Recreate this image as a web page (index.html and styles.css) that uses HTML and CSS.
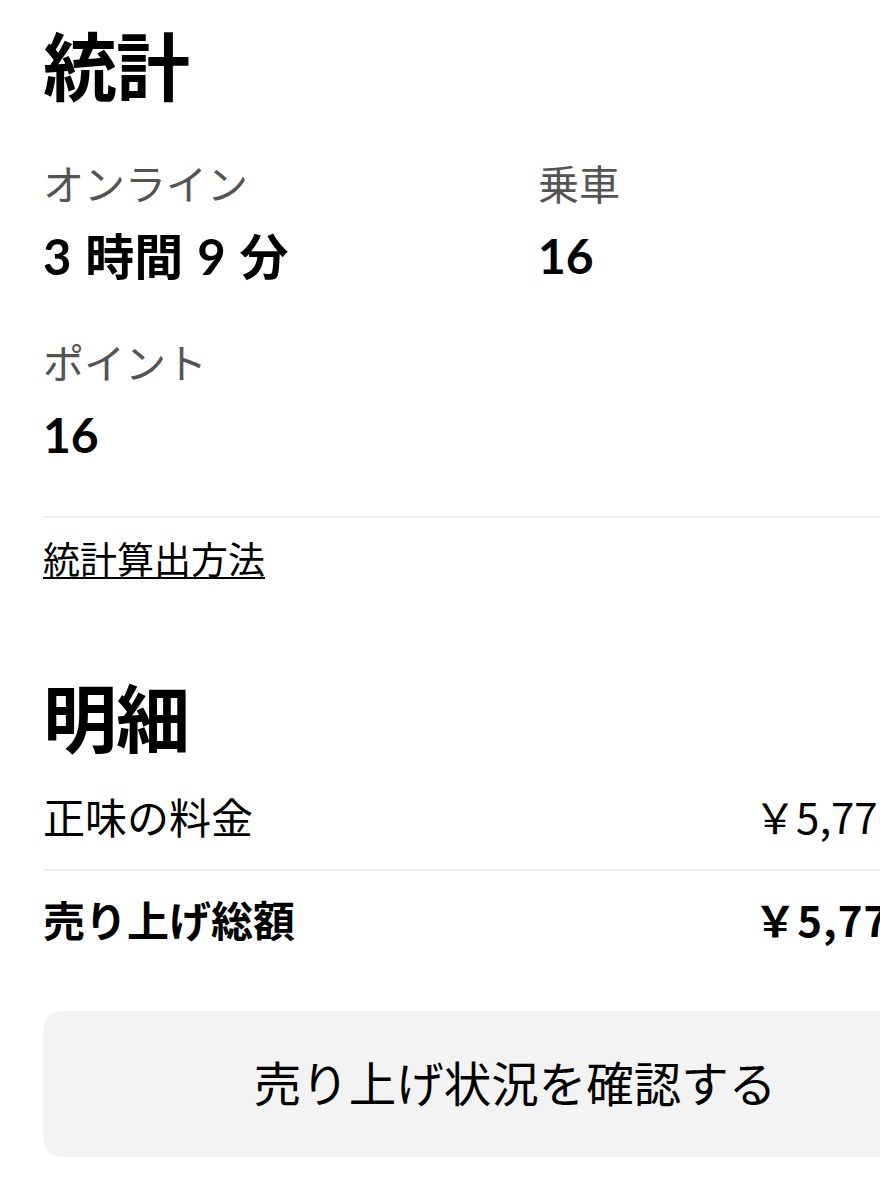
FILE: index.html
```html
<!DOCTYPE html>
<html lang="ja">
<head>
<meta charset="utf-8">
<title>統計</title>
<link rel="stylesheet" href="styles.css">
</head>
<body>
<main class="page">
  <section class="stats">
    <h1 class="title">統計</h1>
    <div class="stat-grid">
      <div class="stat">
        <div class="stat-label">オンライン</div>
        <div class="stat-value stat-time">3 時間 9 分</div>
      </div>
      <div class="stat">
        <div class="stat-label">乗車</div>
        <div class="stat-value">16</div>
      </div>
      <div class="stat">
        <div class="stat-label">ポイント</div>
        <div class="stat-value">16</div>
      </div>
    </div>
    <hr class="divider stats-divider">
    <a class="method-link" href="#">統計算出方法</a>
  </section>

  <section class="breakdown">
    <h1 class="title">明細</h1>
    <div class="row row-first">
      <span class="row-label">正味の料金</span>
      <span class="row-amount">￥5,776</span>
    </div>
    <hr class="divider">
    <div class="row row-total">
      <span class="row-label">売り上げ総額</span>
      <span class="row-amount">￥5,776</span>
    </div>
    <button class="action" type="button">売り上げ状況を確認する</button>
  </section>
</main>
</body>
</html>
```

FILE: styles.css
```css
html, body {
  margin: 0;
  padding: 0;
  background: #ffffff;
  overflow: hidden;
}

body {
  width: 880px;
  height: 1200px;
  font-family: "Noto Sans CJK JP", "Noto Sans", sans-serif;
  color: #000000;
}

.page {
  box-sizing: border-box;
  width: 987px;
  padding: 13px 0 0 43px;
}

.title {
  margin: 0;
  font-size: 74px;
  line-height: 100px;
  font-weight: 700;
  letter-spacing: -1px;
}

.stat-grid {
  display: grid;
  grid-template-columns: 449px 1fr;
  column-gap: 46px;
  row-gap: 53px;
  margin-top: 43px;
}

.stat-label {
  font-size: 41px;
  line-height: 52px;
  color: #545454;
}

.stat-value {
  margin-top: 22px;
  font-family: Lato, "Noto Sans CJK JP", sans-serif;
  font-size: 48px;
  line-height: 52px;
  font-weight: 700;
}

.stat-time {
  font-size: 49px;
  word-spacing: 2px;
}

.divider {
  margin: 0;
  border: 0;
  height: 2px;
  background: #eeeeee;
}

.stats-divider {
  margin-top: 55px;
}

.method-link {
  display: inline-block;
  margin-top: 14px;
  font-size: 37px;
  line-height: 52px;
  color: #000000;
  text-decoration: underline;
  text-decoration-thickness: 2px;
  text-underline-offset: 3px;
}

.breakdown {
  margin-top: 81px;
}

.row {
  display: flex;
  justify-content: space-between;
  align-items: center;
  padding-right: 86px;
  font-size: 42px;
  line-height: 52px;
}

.row-first {
  padding-top: 25px;
  padding-bottom: 27px;
}

.row-total {
  padding-top: 22px;
  padding-right: 72px;
  font-weight: 700;
}

.row-total .row-amount {
  letter-spacing: 1px;
}

.row-amount {
  white-space: nowrap;
}

.action {
  display: block;
  box-sizing: border-box;
  width: 100%;
  height: 146px;
  margin-top: 66px;
  border: 0;
  border-radius: 20px;
  background: #f3f3f3;
  font-family: "Noto Sans CJK JP", sans-serif;
  font-size: 47.5px;
  line-height: 1;
  color: #000000;
  padding: 0 0 4px 0;
}
```
